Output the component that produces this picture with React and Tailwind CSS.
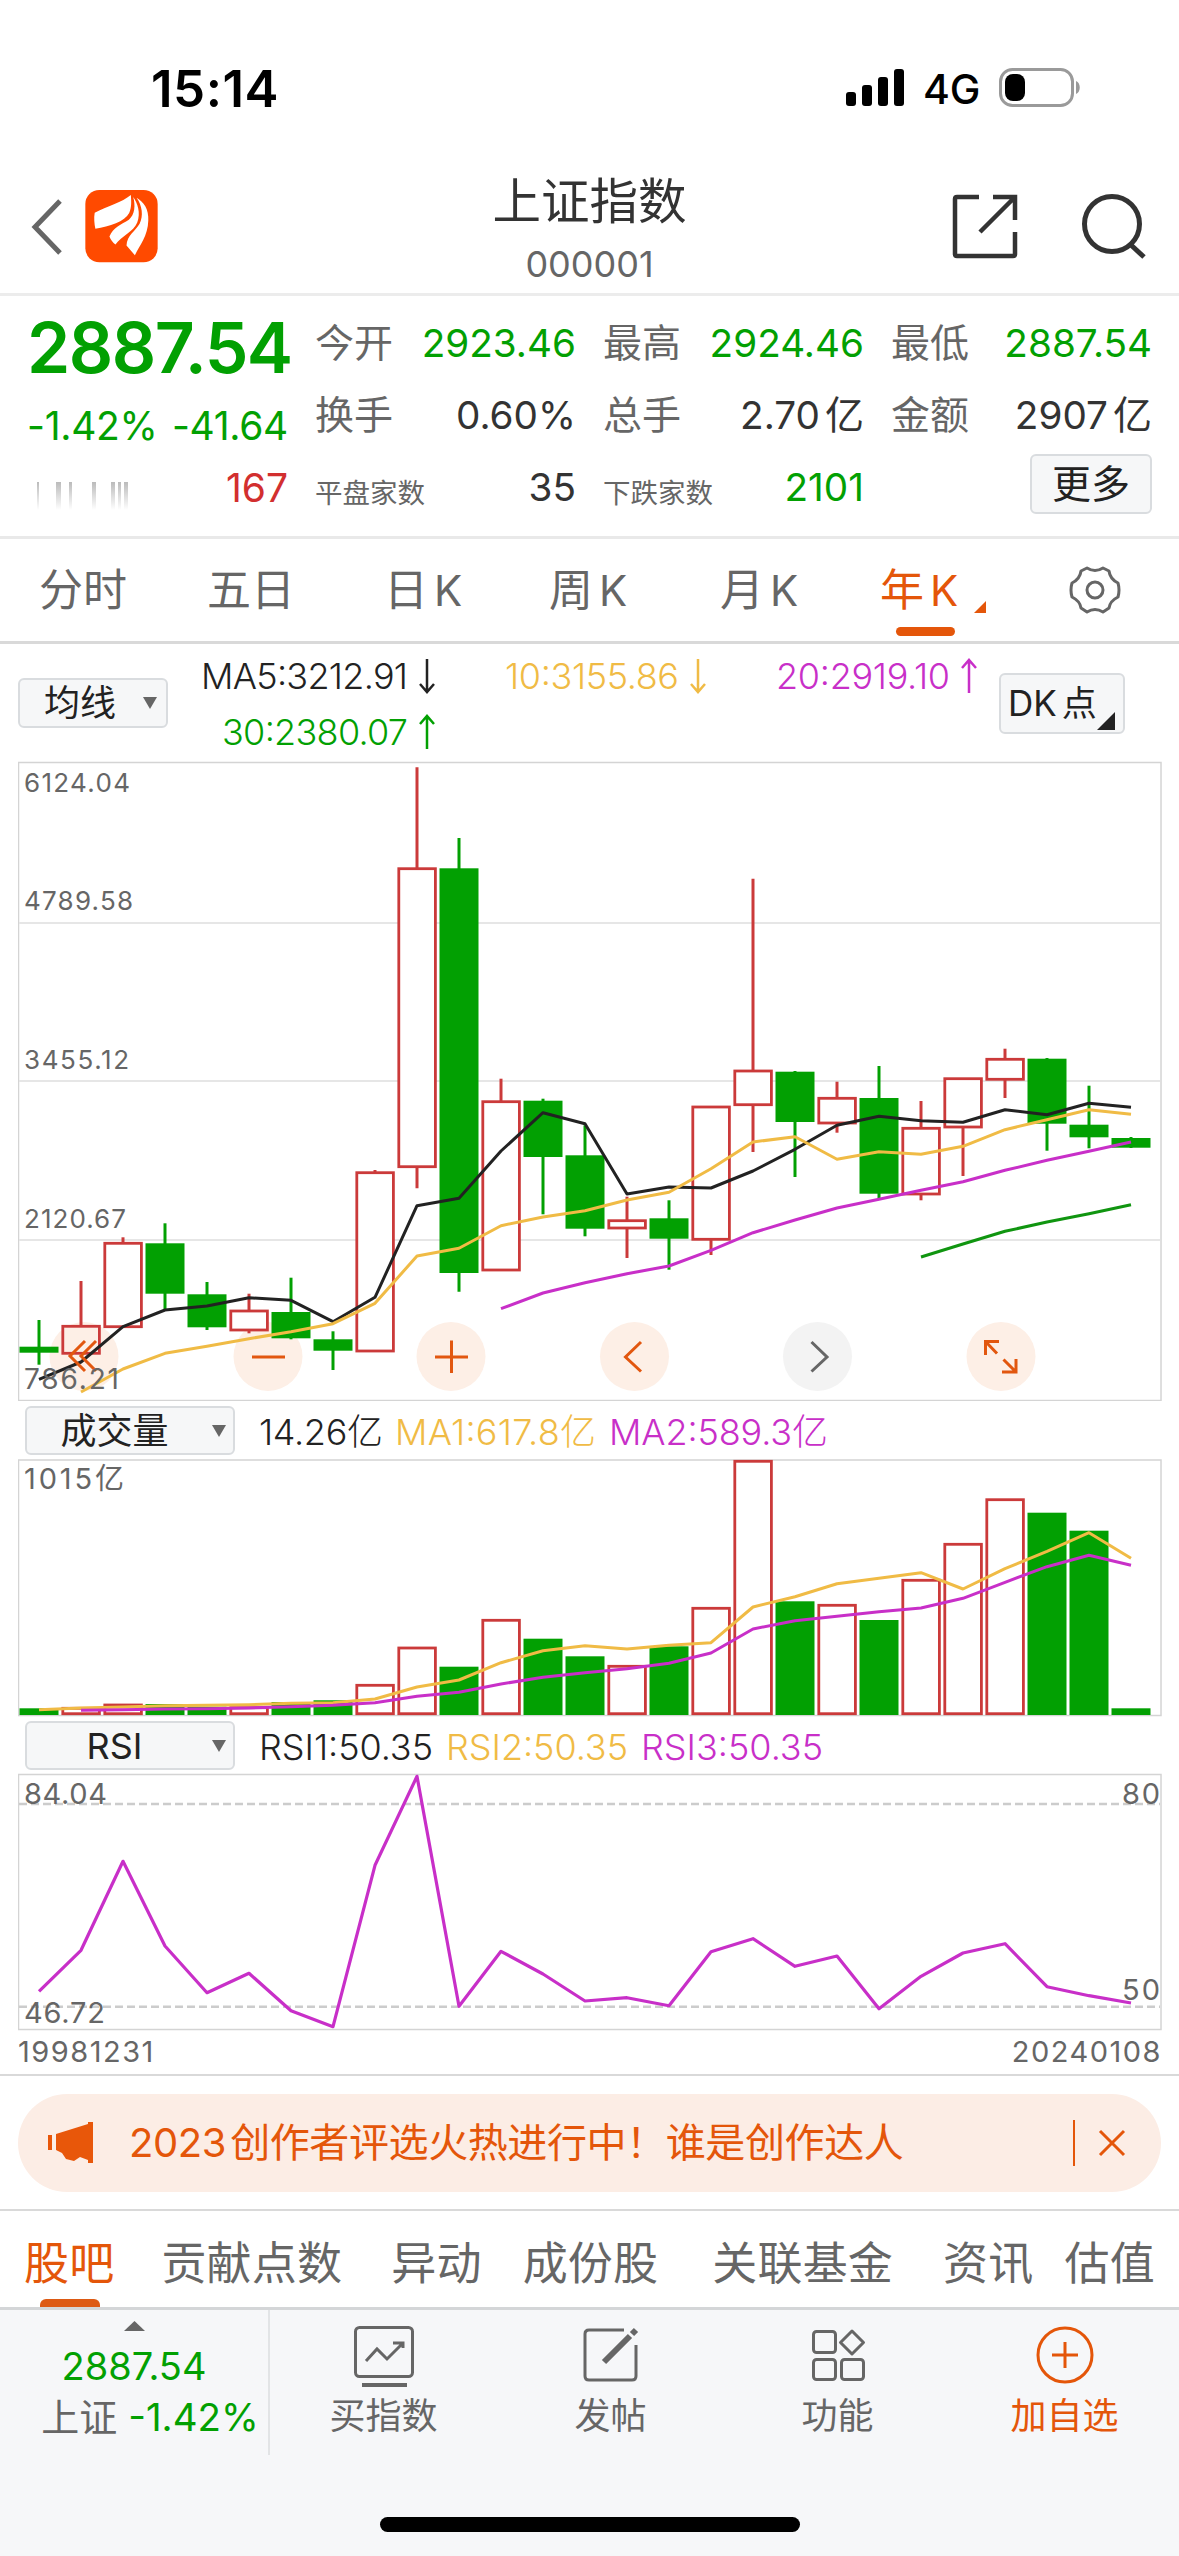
import clsx from 'clsx';

const RED = '#cb3a3a';
const GREEN = '#02a002';
const BLACK = '#222222';
const YELLOW = '#f0bb45';
const PURPLE = '#c82fc8';
const GREY = '#666666';

// x of the n-th yearly bar
const cx = (i) => 39 + i * 42;

// [up, bodyTop, bodyBottom, wickTop, wickBottom]
const CANDLES = [
    [0, 1346.7, 1352.7, 1320, 1364.7],
    [1, 1326.3, 1353.3, 1281, 1326],
    [1, 1243.3, 1326.7, 1237.3, 1326],
    [0, 1243.3, 1293.7, 1223.3, 1310],
    [0, 1294.3, 1327.3, 1282, 1330],
    [1, 1311, 1330, 1293.7, 1333.3],
    [0, 1312, 1338.3, 1277.7, 1339.3],
    [0, 1339.3, 1350.7, 1331.3, 1370],
    [1, 1172.7, 1351, 1170, 1351],
    [1, 868.7, 1166.7, 767.3, 1188.3],
    [0, 868.3, 1273, 838, 1291.7],
    [1, 1101.7, 1270, 1078.7, 1270],
    [0, 1100.7, 1157, 1098.7, 1214.3],
    [0, 1155.3, 1228.7, 1125.3, 1236.3],
    [1, 1220.7, 1228, 1196.7, 1258],
    [0, 1218.3, 1238.7, 1200.3, 1269.7],
    [1, 1107, 1239.3, 1107, 1255],
    [1, 1071, 1104.7, 878.7, 1152],
    [0, 1071.7, 1122, 1071, 1177],
    [1, 1098.3, 1123, 1081.7, 1132.7],
    [0, 1098, 1193.7, 1066, 1199],
    [1, 1128.3, 1194, 1101, 1200.3],
    [1, 1078.7, 1127, 1078.7, 1176],
    [1, 1059.3, 1079.3, 1048.7, 1098],
    [0, 1058.7, 1123.7, 1058, 1150.7],
    [0, 1124.7, 1137.3, 1085.7, 1148.3],
    [0, 1138, 1147.7, 1137, 1148],
];

const MA5 = [1379.3, 1362, 1326.7, 1310, 1306, 1297.7, 1300.3, 1321.7, 1297.3, 1205.7, 1198.3, 1151, 1112.7, 1123.7, 1194, 1187, 1188, 1171, 1149.3, 1125.3, 1116.3, 1120.7, 1122.3, 1109.7, 1114.7, 1103.3, 1107.3];
const MA10 = [1392, 1369, 1353.3, 1346.3, 1338.7, 1331.7, 1323.7, 1303.3, 1256, 1248.3, 1225.7, 1217, 1210.7, 1200, 1192.3, 1168.7, 1142, 1136.7, 1159.3, 1151.7, 1154.3, 1146.3, 1129.7, 1119.7, 1109.7, 1114.3];
const MA20 = [1308.7, 1293, 1282.7, 1273.7, 1266, 1250.3, 1232.7, 1220, 1208, 1199.3, 1190.3, 1181.7, 1170.3, 1160.3, 1151.3, 1142];
const MA30 = [1257, 1244, 1231.3, 1222, 1213.7, 1204.7];

const VOLUME = [1708.3, 1708.3, 1705, 1704, 1706.7, 1707.7, 1702, 1700.3, 1685.3, 1648, 1666.7, 1620.3, 1638.7, 1656.3, 1666.3, 1646.3, 1608.3, 1461.3, 1601.3, 1605.3, 1620, 1580.3, 1544.3, 1499.7, 1512.7, 1530.7, 1708.3];
const VOL_MA1 = [1709.7, 1708, 1707, 1705.7, 1705.3, 1704.7, 1703.3, 1702.7, 1699, 1687, 1680, 1662.7, 1650.7, 1645.7, 1649, 1645.3, 1642.7, 1607, 1596.7, 1583.7, 1578.3, 1572.7, 1589, 1568.7, 1551.3, 1532.7, 1558.3];
const VOL_MA2 = [1710.3, 1709.7, 1709, 1708.7, 1708, 1706.7, 1705.3, 1702.7, 1696.3, 1692.3, 1684, 1677.3, 1672.7, 1668.7, 1663.3, 1653, 1629, 1620.7, 1616.3, 1611.7, 1608, 1598.3, 1582.3, 1566.7, 1555.3, 1565.3];
const RSI = [1991.3, 1950.3, 1861.3, 1946, 1992.7, 1973.3, 2010.7, 2026.7, 1865.3, 1776.3, 2006.3, 1951.3, 1974, 2001, 1997.7, 2005.7, 1951.7, 1938.7, 1966.3, 1956, 2008.7, 1976.3, 1953, 1943.7, 1986.7, 1995.7, 2003];

function Line({ data, from = 0, color, width = 3 }) {
    const points = data.map((y, i) => `${cx(i + from)},${y}`).join(' ');
    return <polyline points={points} fill="none" stroke={color} strokeWidth={width} strokeLinejoin="round" />;
}

// Hollow bars rise, filled bars fall
function Bar({ i, up, top, bottom, fill = 'white' }) {
    if (up) {
        return (
            <rect x={cx(i) - 18.2} y={top} width={36.6} height={bottom - top} fill={fill} stroke={RED} strokeWidth={2.8} />
        );
    }
    return <rect x={cx(i) - 19.5} y={top} width={39} height={bottom - top} fill={GREEN} />;
}

function AxisText({ x, y, w, children, anchor = 'start', size = 26 }) {
    return (
        <text x={x} y={y} fontSize={size} fill={GREY} textAnchor={anchor} textLength={w}>
            {children}
        </text>
    );
}

function CandleChart() {
    return (
        <svg className="block h-[640px] w-[1144px]" viewBox="18 761 1144 640">
            <rect x="18.5" y="762.5" width="1142.5" height="638" fill="none" stroke="#d4d4d4" strokeWidth="1.5" />
            {[923, 1081, 1240].map((y) => (
                <line key={y} x1="19" x2="1160" y1={y} y2={y} stroke="#e6e6e6" strokeWidth="2" />
            ))}
            {[[84, '#fdefe6'], [268, '#fdefe6'], [451, '#fdefe6'], [634.5, '#fdefe6'], [817.5, '#f3f3f3'], [1001, '#fdefe6']].map(([x, fill]) => (
                <circle key={x} cx={x} cy="1356.5" r="34.5" fill={fill} />
            ))}
            {CANDLES.map(([up, top, bottom, hi, lo], i) => (
                <g key={i}>
                    <line x1={cx(i)} x2={cx(i)} y1={hi} y2={lo} stroke={up ? RED : GREEN} strokeWidth="3" />
                    {/* the second one lets the round button show through */}
                    <Bar i={i} up={up} top={top} bottom={bottom} fill={i === 1 ? 'none' : 'white'} />
                </g>
            ))}
            <Line data={MA5} color={BLACK} />
            <Line data={MA10} from={1} color={YELLOW} />
            <Line data={MA20} from={11} color={PURPLE} />
            <Line data={MA30} from={21} color="#109510" />

            <g fill="none" stroke="#e2570f" strokeWidth="3">
                <path d="M85 1341 L70 1356 L85 1371 M96 1341 L81 1356 L96 1371" />
                <path d="M252 1357 H285" />
                <path d="M435 1357 H468 M451.5 1340.5 V1373" />
                <path d="M641 1342 L625.5 1357 L641 1371.5" />
                <path d="M985.5 1355 V1341.5 H999 M985.5 1341.5 L997 1353.5 M1016 1359 V1372 H1002 M1016 1372 L1003.5 1359.5" />
            </g>
            <path d="M811.5 1342 L827 1357 L811.5 1371.5" fill="none" stroke={GREY} strokeWidth="3" />

            <AxisText x="24" y="792" w="106">6124.04</AxisText>
            <AxisText x="24" y="909.5" w="109">4789.58</AxisText>
            <AxisText x="24" y="1068.5" w="105">3455.12</AxisText>
            <AxisText x="24" y="1227.5" w="102">2120.67</AxisText>
            <AxisText x="24" y="1389" w="95" size={28}>786.21</AxisText>
        </svg>
    );
}

function VolumeChart() {
    return (
        <svg className="block h-[258px] w-[1144px]" viewBox="18 1459 1144 258">
            <rect x="18.5" y="1460" width="1142.5" height="255.5" fill="none" stroke="#d4d4d4" strokeWidth="1.5" />
            {VOLUME.map((y, i) => (
                <Bar key={i} i={i} up={CANDLES[i][0]} top={y} bottom={CANDLES[i][0] ? 1713.7 : 1715} />
            ))}
            <Line data={VOL_MA1} color={YELLOW} />
            <Line data={VOL_MA2} from={1} color={PURPLE} />
            <AxisText x="24" y="1489" w="100" size={29}>1015亿</AxisText>
        </svg>
    );
}

function RsiChart() {
    return (
        <svg className="block h-[258px] w-[1144px]" viewBox="18 1773 1144 258">
            <rect x="18.5" y="1774.5" width="1142.5" height="255" fill="none" stroke="#d4d4d4" strokeWidth="1.5" />
            {[1804, 2006.7].map((y) => (
                <line key={y} x1="19" x2="1160" y1={y} y2={y} stroke="#cccccc" strokeWidth="2.5" strokeDasharray="8 4" />
            ))}
            <AxisText x="24" y="1804" w="83" size={29}>84.04</AxisText>
            <AxisText x="24" y="2023" w="81" size={29}>46.72</AxisText>
            <AxisText x="1160" y="1804" w="38" size={29} anchor="end">80</AxisText>
            <AxisText x="1160" y="2000" w="38" size={29} anchor="end">50</AxisText>
            <Line data={RSI} color={PURPLE} width={3.2} />
        </svg>
    );
}

function StatusBar() {
    return (
        <div className="flex h-[176px] items-center justify-between pr-[97px] pl-[151px]">
            <span className="pt-[2px] text-[51px] font-semibold tracking-[0.5px] text-black">15:14</span>
            <div className="flex items-center">
                <svg className="h-10 w-[60px]" viewBox="0 0 60 40">
                    <rect x="0" y="24" width="10" height="14" rx="3" />
                    <rect x="16" y="17" width="10" height="21" rx="3" />
                    <rect x="32" y="9" width="10" height="29" rx="3" />
                    <rect x="48" y="1" width="10" height="37" rx="3" />
                </svg>
                <span className="ml-[17px] w-[60px] pt-[3px] text-[41px] font-medium tracking-[-0.2px] text-black">4G</span>
                <svg className="ml-[16px] h-10 w-[83px]" viewBox="0 0 83 40">
                    <rect x="1.5" y="1.5" width="72" height="36" rx="12" fill="none" stroke="#9a9a9a" strokeWidth="3" />
                    <rect x="6" y="6" width="20" height="27" rx="8" />
                    <path d="M77 13 C82 15 82 24 77 26 Z" fill="#9a9a9a" />
                </svg>
            </div>
        </div>
    );
}

function Header() {
    return (
        <header className="flex h-[120px] items-start justify-between border-b-3 border-[#ececec] pr-[30px] pl-[30px]">
            <div className="flex w-[200px] items-center pt-[14px]">
                <svg className="h-[56px] w-[34px]" viewBox="0 0 34 56" fill="none" stroke="#666" strokeWidth="5">
                    <path d="M30 2 L5 28 L30 54" />
                </svg>
                <svg className="ml-[21px] size-[73px]" viewBox="15 15 218 218">
                    <rect x="16" y="15" width="216" height="216" rx="42" fill="#ff4a00" />
                    <path d="M152 30 C125 52 85 62 44 83 C41 98 43 116 46 131 C88 124 134 110 147 84 C155 66 153 48 152 30 Z" fill="white" />
                    <path d="M159 36 C166 62 164 88 146 104 C124 118 98 128 88 154 C92 164 98 172 106 178 C124 152 160 140 171 112 C182 84 172 54 159 36 Z" fill="white" />
                    <path d="M169 38 C186 62 190 92 178 116 C166 138 140 150 139 181 C147 190 155 200 164 210 C178 180 203 152 204 106 C206 72 190 50 169 38 Z" fill="white" />
                </svg>
            </div>
            <div className="flex flex-col items-center pt-[2px] text-center leading-none">
                <h1 className="text-[48.5px] text-[#333]">上证指数</h1>
                <span className="mt-[19px] text-[36px] text-[#666]">000001</span>
            </div>
            <div className="flex w-[200px] justify-end pt-[16px]">
                <svg className="h-[68px] w-[68px]" viewBox="0 0 68 68" fill="none" stroke="#333" strokeWidth="4.5">
                    <path d="M28 5 H6 Q4 5 4 7 V62 Q4 64 6 64 H62 Q64 64 64 62 V40 M42 5 H64 V28 M64 5 L29 40" />
                </svg>
                <svg className="ml-[62px] h-[68px] w-[68px]" viewBox="0 0 68 68" fill="none" stroke="#333" strokeWidth="5">
                    <circle cx="31" cy="32" r="27.5" />
                    <path d="M50 53 L63 65" />
                </svg>
            </div>
        </header>
    );
}

function Stat({ label, value, unit, color = 'text-[#333]', small }) {
    return (
        <div className="flex h-[72px] items-center justify-between">
            <span className={clsx('text-[#666]', small ? 'pt-[14px] text-[27.5px]' : 'text-[39px]')}>{label}</span>
            <span className={clsx('text-[38.7px]', color)}>
                {value}
                {unit && <span className="ml-[5px] text-[39px]">{unit}</span>}
            </span>
        </div>
    );
}

function Quote() {
    return (
        <section className="flex h-[243px] border-b-3 border-[#e9e9e9] pl-[27px]">
            <div className="w-[264px]">
                <div className="flex h-[104px] items-center text-[69.5px] font-semibold tracking-[-1.5px] text-[#02a002]">2887.54</div>
                <div className="flex h-[53px] items-center justify-between pr-[3px] text-[39px] tracking-[-0.3px] text-[#02a002]">
                    <span>-1.42%</span>
                    <span>-41.64</span>
                </div>
                <div className="flex h-[71px] items-center justify-between pr-[3px]">
                    {/* half-rendered caption */}
                    <svg className="mt-4 h-[34px] w-[104px]" viewBox="0 0 104 34">
                        <defs>
                            <linearGradient id="fade" x1="0" x2="0" y1="0" y2="1">
                                <stop offset="0" stopColor="#777" />
                                <stop offset="1" stopColor="#fff" />
                            </linearGradient>
                        </defs>
                        {[[10, 2], [29, 5], [42, 3], [65, 4], [84, 4], [91, 3], [97, 4]].map(([x, w]) => (
                            <rect key={x} x={x} y="2" width={w} height="28" fill="url(#fade)" opacity="0.5" />
                        ))}
                    </svg>
                    <span className="text-[39px] text-[#d22f2f]">167</span>
                </div>
            </div>
            <div className="ml-[24px] w-[261px] pt-[11px]">
                <Stat label="今开" value="2923.46" color="text-[#02a002]" />
                <Stat label="换手" value="0.60%" />
                <Stat label="平盘家数" value="35" small />
            </div>
            <div className="ml-[27px] w-[261px] pt-[11px]">
                <Stat label="最高" value="2924.46" color="text-[#02a002]" />
                <Stat label="总手" value="2.70" unit="亿" />
                <Stat label="下跌家数" value="2101" color="text-[#02a002]" small />
            </div>
            <div className="ml-[27px] w-[261px] pt-[11px]">
                <Stat label="最低" value="2887.54" color="text-[#02a002]" />
                <Stat label="金额" value="2907" unit="亿" />
                <div className="mt-[3px] ml-auto flex h-[60px] w-[122px] items-center justify-center rounded-md border-2 border-[#d9dcdf] bg-[#f6f7f8] text-[39px] text-[#222]">
                    更多
                </div>
            </div>
        </section>
    );
}

const PERIODS = [
    ['分时', '', 'w-[166px]'],
    ['五日', '', 'w-[170px]'],
    ['日', 'K', 'w-[174px]'],
    ['周', 'K', 'w-[156px]'],
    ['月', 'K', 'w-[186px]'],
];

function PeriodTabs() {
    return (
        <nav className="flex h-[105px] items-center border-b-3 border-[#d9d9d9] text-[44px] text-[#666]">
            {PERIODS.map(([name, suffix, width]) => (
                <span key={name} className={clsx('shrink-0 text-center', width)}>
                    {name}
                    {suffix && <span className="ml-[6px] text-[42px]">{suffix}</span>}
                </span>
            ))}
            <span className="relative w-[134px] text-center text-[#e4560a]">
                年<span className="ml-[6px] text-[42px]">K</span>
                <span className="absolute -bottom-[13px] left-[44px] h-[9px] w-[59px] rounded-full bg-[#e4560a]" />
                <svg className="absolute right-0 bottom-[10px] size-3" viewBox="0 0 12 12" fill="#e4560a">
                    <path d="M12 0 V12 H0 Z" />
                </svg>
            </span>
            <svg className="ml-[82px] h-[50px] w-[54px]" viewBox="0 0 54 50" fill="none" stroke="#666" strokeWidth="3">
                <path
                    strokeLinejoin="round"
                    d="M19 3 Q27 8 35 3 L41 6 Q42 14 50 18 Q52 25 50 32 Q42 36 41 43 L35 47 Q27 42 19 47 L13 43 Q12 36 4 32 Q2 25 4 18 Q12 14 13 6 Z"
                />
                <circle cx="27" cy="25" r="8" />
            </svg>
        </nav>
    );
}

function Arrow({ up, color }) {
    return (
        <svg className="h-[36px] w-[16px]" viewBox="0 0 16 36" fill="none" stroke={color} strokeWidth="2.5">
            {up ? <path d="M8 35 V2 M1 10 L8 2 L15 10" /> : <path d="M8 1 V34 M1 26 L8 34 L15 26" />}
        </svg>
    );
}

function Average({ text, width, color, up }) {
    return (
        <div className="flex h-[56px] items-center justify-end gap-[11px]">
            <svg className="h-[44px]" style={{ width }} viewBox={`0 0 ${width} 44`}>
                <text x="0" y="34.5" fontSize="36" fontWeight="300" fill={color} textLength={width}>
                    {text}
                </text>
            </svg>
            <Arrow up={up} color={color} />
        </div>
    );
}

function Caret() {
    return (
        <svg className="h-[12px] w-[14px]" viewBox="0 0 14 12" fill="#666">
            <path d="M0 0 H14 L7 12 Z" />
        </svg>
    );
}

function AverageRow() {
    return (
        <div className="flex h-[117px]">
            <div className="mt-[34px] ml-[18px] flex h-[50px] w-[150px] items-center justify-between rounded-md border-2 border-[#d9dcdf] bg-[#f6f7f8] pr-[9px] pl-[24px] text-[36px] text-[#222]">
                均线
                <Caret />
            </div>
            <div className="ml-[33px] pt-[4px]">
                <Average text="MA5:3212.91" width={207} color={BLACK} />
                <Average text="30:2380.07" width={186} color={GREEN} up />
            </div>
            <div className="ml-[70px] pt-[4px]">
                <Average text="10:3155.86" width={174} color={YELLOW} />
            </div>
            <div className="ml-[70px] pt-[4px]">
                <Average text="20:2919.10" width={174} color={PURPLE} up />
            </div>
            <div className="mt-[29px] ml-[22px] flex h-[61px] w-[126px] items-center rounded-md border-2 border-[#d9dcdf] bg-[#f6f7f8] pl-[7px] text-[35px] text-[#222]">
                <span className="w-[89px] whitespace-nowrap">
                    DK<span className="ml-[5px]">点</span>
                </span>
                <svg className="mt-[34px] h-[18px] w-[18px]" viewBox="0 0 18 18">
                    <path d="M18 0 V18 H0 Z" fill="#222" />
                </svg>
            </div>
        </div>
    );
}

function IndicatorRow({ name, items, height }) {
    return (
        <div className={clsx('flex items-center pt-[1px]', height)}>
            <div className="ml-[25px] flex h-[49px] w-[210px] items-center rounded-md border-2 border-[#d9dcdf] bg-[#f6f7f8] text-[36px] text-[#222]">
                <span className="w-[185px] pr-[10px] text-center">{name}</span>
                <Caret />
            </div>
            <svg className="h-[44px] w-[620px]" viewBox="235 0 620 44">
                {items.map(([text, x, w, color]) => (
                    <text key={text} x={x} y="35.5" fontSize="36" fontWeight="300" fill={color} textLength={w}>
                        {text}
                    </text>
                ))}
            </svg>
        </div>
    );
}

function Banner() {
    return (
        <div className="border-y-2 border-[#d9d9d9] px-[18px] pt-[18px] pb-[17px]">
            <div className="flex h-[98px] items-center rounded-full bg-[#fcede5] pr-[35px] pl-[30px] text-[40px] text-[#e4560a]">
                <svg className="h-[44px] w-[46px]" viewBox="0 0 46 44" fill="#e8570a">
                    <path d="M0 14 H4 V29 H0 Z M8 13 L40 3 V1 H45 V42 H40 V39 L32 36 L26 40 L18 38 L14 32 L8 29 Z" />
                </svg>
                <span className="ml-[35px] flex-1 tracking-[-0.4px] whitespace-nowrap">
                    2023<span className="ml-[4px]">创作者评选火热进行中！谁是创作达人</span>
                </span>
                <span className="h-[46px] w-[2px] bg-[#e4560a]" />
                <svg className="ml-[23px] size-[28px]" viewBox="0 0 28 28" fill="none" stroke="#e4560a" strokeWidth="3">
                    <path d="M2 2 L26 26 M26 2 L2 26" />
                </svg>
            </div>
        </div>
    );
}

const TOPICS = [
    ['贡献点数', 'ml-[47px]'],
    ['异动', 'ml-[49px]'],
    ['成份股', 'ml-[41px]'],
    ['关联基金', 'ml-[54px]'],
    ['资讯', 'ml-[50px]'],
    ['估值', 'ml-[31px]'],
];

function TopicTabs() {
    return (
        <nav className="flex h-[99px] items-center border-b-3 border-[#d4d6d8] pt-[10px] pl-[24px] text-[45px] tracking-[0.2px] whitespace-nowrap text-[#666]">
            <span className="relative text-[#e4560a]">
                股吧
                <span className="absolute -bottom-[9px] left-[16px] h-[8px] w-[60px] rounded-t-md bg-[#dd5a14]" />
            </span>
            {TOPICS.map(([name, gap]) => (
                <span key={name} className={gap}>
                    {name}
                </span>
            ))}
        </nav>
    );
}

function Action({ label, color = 'text-[#666]', children }) {
    return (
        <div className={clsx('flex w-[227px] flex-col items-center', color)}>
            <svg className="mt-[12px] h-[66px] w-[66px]" viewBox="0 0 66 66" fill="none" stroke="currentColor" strokeWidth="3">
                {children}
            </svg>
            <span className="mt-[10px] text-[36px] leading-none">{label}</span>
        </div>
    );
}

function BottomBar() {
    return (
        <footer className="flex h-[247px] flex-col items-center bg-[#f6f7f9]">
            <div className="flex h-[145px] w-full">
                <div className="flex w-[270px] flex-col items-center border-r-2 border-[#e2e4e6] leading-none">
                    <svg className="mt-[11px] h-[10px] w-[21px]" viewBox="0 0 21 10" fill="#666">
                        <path d="M10.5 0 L21 10 H0 Z" />
                    </svg>
                    <span className="mt-[16px] text-[38px] text-[#02a002]">2887.54</span>
                    <span className="mt-[13px] ml-[32px] flex items-center gap-[11px] text-[38px] whitespace-nowrap text-[#666]">
                        上证<span className="text-[38.5px] text-[#02a002]">-1.42%</span>
                    </span>
                </div>
                <Action label="买指数">
                    <rect x="4.5" y="5.5" width="57" height="49" rx="4" />
                    <path d="M15 39 L26 27 L36 37 L52 21 M42 21 H52 V26" />
                    <path d="M11 63 H56" strokeWidth="4" />
                </Action>
                <Action label="发帖">
                    <path d="M46 8 H11 Q7 8 7 12 V54 Q7 58 11 58 H54 Q58 58 58 54 V23" />
                    <path d="M26 40 L52 14 M54 12 L58 8" strokeWidth="6" />
                </Action>
                <Action label="功能">
                    <rect x="8.5" y="9.5" width="22" height="21" rx="3" />
                    <rect x="8.5" y="37.5" width="22" height="20" rx="3" />
                    <rect x="36.5" y="37.5" width="22" height="20" rx="3" />
                    <path d="M47 9 L58.5 20.5 L47 32 L35.5 20.5 Z" strokeLinejoin="round" />
                </Action>
                <Action label="加自选" color="text-[#e4560a]">
                    <circle cx="33" cy="33" r="27" />
                    <path d="M20 33 H46 M33 20 V46" />
                </Action>
            </div>
            <div className="mt-[62px] h-[15px] w-[420px] rounded-full bg-black" />
        </footer>
    );
}

export default function App() {
    return (
        <div className="h-[2556px] w-[1179px] overflow-hidden bg-white font-[Inter,'Noto_Sans_CJK_SC',sans-serif]">
            <StatusBar />
            <Header />
            <Quote />
            <PeriodTabs />
            <AverageRow />
            <div className="ml-[18px]">
                <CandleChart />
            </div>
            <IndicatorRow
                name="成交量"
                height="h-[58px]"
                items={[
                    ['14.26亿', 259, 124, BLACK],
                    ['MA1:617.8亿', 395, 201, YELLOW],
                    ['MA2:589.3亿', 609, 219, PURPLE],
                ]}
            />
            <div className="ml-[18px]">
                <VolumeChart />
            </div>
            <IndicatorRow
                name="RSI"
                height="h-[56px]"
                items={[
                    ['RSI1:50.35', 259, 174, BLACK],
                    ['RSI2:50.35', 446, 182, YELLOW],
                    ['RSI3:50.35', 641, 182, PURPLE],
                ]}
            />
            <div className="ml-[18px]">
                <RsiChart />
            </div>
            <div className="flex h-[43px] items-center justify-between pr-[17px] pb-[2px] pl-[18px] text-[29px] tracking-[1.5px] text-[#666]">
                <span>19981231</span>
                <span>20240108</span>
            </div>
            <Banner />
            <TopicTabs />
            <BottomBar />
        </div>
    );
}
